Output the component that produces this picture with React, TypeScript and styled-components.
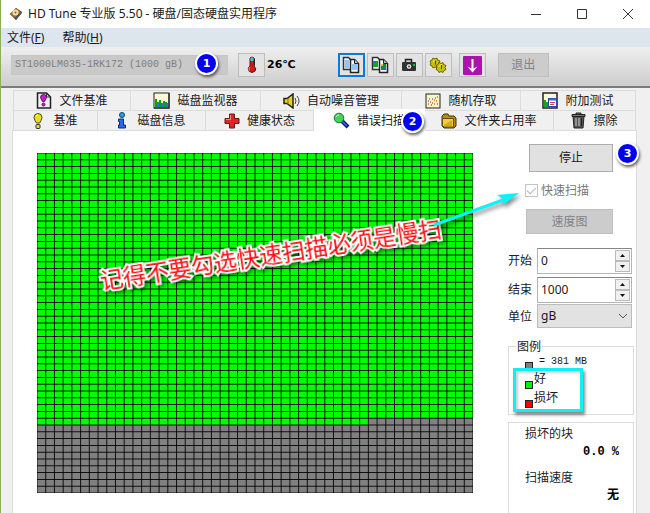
import React from "react";
import styled, { createGlobalStyle, css } from "styled-components";

const GlobalStyle = createGlobalStyle`
  *, *::before, *::after { box-sizing: border-box; }
  body {
    margin: 0;
    font-family: "Noto Sans", "Noto Sans CJK SC", sans-serif;
    font-size: 12px;
    line-height: 16px;
    color: #1a1a1a;
    background: #f0f0f0;
  }
  button, input, select { font: inherit; color: inherit; margin: 0; }
`;

const mono = css`
  font-family: "Liberation Mono", "Noto Sans CJK SC", monospace;
`;

const Window = styled.div`
  display: flex;
  flex-direction: column;
  height: 100vh;
  overflow: hidden;
  border-left: 1px solid #8cae5e;
  background: #f0f0f0;
`;

const TitleBar = styled.header`
  display: flex;
  flex: none;
  align-items: center;
  height: 28px;
  padding: 0 7px 0 8px;
  gap: 5px;
  background: #fff;
`;

const Title = styled.h1`
  flex: 1;
  margin: 0;
  font-size: 12px;
  font-weight: 400;
  white-space: nowrap;
`;

const WindowButtons = styled.div`
  display: flex;
  gap: 16px;
`;

const WindowButton = styled.button`
  display: grid;
  place-items: center;
  width: 30px;
  height: 26px;
  padding: 0;
  border: 0;
  background: none;
`;

const MenuBar = styled.nav`
  display: flex;
  flex: none;
  align-items: center;
  gap: 18px;
  height: 19px;
  padding: 0 6px;
  background: #dde5ee;
`;

const MenuItem = styled.button`
  padding: 0;
  border: 0;
  background: none;
  line-height: 19px;
`;

const Toolbar = styled.div`
  display: flex;
  flex: none;
  align-items: center;
  height: 41px;
  padding: 0 10px 3px;
  border-bottom: 2px solid #7c7c7c;
  background: linear-gradient(#efefef, #cdcdcd);
`;

const DriveBox = styled.div`
  position: relative;
  width: 217px;
`;

const DriveSelect = styled.select`
  ${mono}
  display: block;
  appearance: none;
  width: 100%;
  height: 20px;
  padding: 0 3px;
  border: 1px solid #c6c6c6;
  border-radius: 0;
  background: #c9c9c9;
  font-size: 10px;
  &:disabled { color: #808080; opacity: 1; }
`;

const Badge = styled.span<{ $place: "drive" | "tab" | "panel" }>`
  position: absolute;
  z-index: 3;
  display: grid;
  place-items: center;
  width: 23px;
  height: 23px;
  border: 2px solid #fff;
  border-radius: 50%;
  background: #0000f5;
  box-shadow: 1px 2px 3px #0009;
  color: #fff;
  font-family: "DejaVu Sans", sans-serif;
  font-size: 11px;
  font-weight: 700;
  ${(p) => p.$place === "drive" && css`right: 10px; top: -3px;`}
  ${(p) => p.$place === "tab" && css`right: 0; top: 0;`}
  ${(p) => p.$place === "panel" && css`right: -3px; top: 11px;`}
`;

const ToolButton = styled.button<{ $active?: boolean }>`
  display: grid;
  place-items: center;
  width: 27px;
  height: 24px;
  padding: 0;
  border: ${(p) => (p.$active ? "2px solid #0a7bd8" : "1px solid #bdbdbd")};
  background: #e3e3e3;
`;

const Temperature = styled.div`
  display: flex;
  align-items: center;
  gap: 2px;
  margin-left: 10px;
  font-family: "DejaVu Sans", "Noto Sans CJK SC", sans-serif;
  font-size: 11px;
  font-weight: 700;
  color: #000;
`;

const ToolGroup = styled.div`
  display: flex;
  gap: 2px;
  margin-left: 42px;
`;

const SaveGroup = styled.div`
  display: flex;
  gap: 12px;
  margin-left: 7px;
`;

const PushButton = styled.button`
  height: 28px;
  padding: 0;
  border: 1px solid #adadad;
  background: #e1e1e1;
  &:disabled {
    height: 25px;
    border-color: #bfbfbf;
    background: #cccccc;
    color: #838383;
  }
`;

const ExitButton = styled(PushButton)`
  width: 51px;
  &:disabled { height: 24px; }
`;

const Tabs = styled.div`
  flex: none;
  margin: 2px 14px 0 12px;
`;

const TabRow = styled.div<{ $columns: string }>`
  display: grid;
  grid-template-columns: ${(p) => p.$columns};
  height: 20px;
`;

const Tab = styled.button<{ $gap?: number }>`
  position: relative;
  display: flex;
  align-items: center;
  justify-content: center;
  gap: ${(p) => p.$gap ?? 7}px;
  padding: 0;
  border: solid #dcdcdc;
  border-width: 1px 1px 0 0;
  background: #f0f0f0;
  white-space: nowrap;
  &:first-child { border-left-width: 1px; }
  &[aria-selected="true"] {
    z-index: 1;
    margin: -1px 0;
    border-color: #fff;
    background: #fff;
  }
`;

const Panel = styled.main`
  position: relative;
  display: flex;
  flex: 1;
  gap: 35px;
  min-height: 0;
  margin: 0 13px 0 11px;
  padding: 22px 2px 0 24px;
  border: solid #dcdcdc;
  border-width: 1px 1px 0;
  background: #fff;
`;

const MapArea = styled.section`
  position: relative;
  flex: 1;
`;

const MapChart = styled.svg`
  display: block;
  width: 100%;
  height: 340px;
`;

const Caption = styled.p`
  position: absolute;
  left: 50%;
  top: 86px;
  width: 346px;
  margin: 0 0 0 -157px;
  transform: rotate(-8.8deg);
  color: #fb0d12;
  font-family: "Noto Sans CJK SC", sans-serif;
  font-size: 23px;
  line-height: 28px;
  white-space: nowrap;
  paint-order: stroke fill;
  -webkit-text-stroke: 4px #fff;
  filter: drop-shadow(2px 2px 2px #0008);
`;

const Arrow = styled.svg`
  position: absolute;
  z-index: 2;
  top: 35px;
  right: -52px;
  filter: drop-shadow(2px 3px 2px #0007);
`;

const Side = styled.aside`
  display: flex;
  flex-direction: column;
  width: 126px;
`;

const Actions = styled.div`
  display: flex;
  flex-direction: column;
  margin: -9px 21px 14px 18px;
  gap: 10px;
`;

const StopButton = styled(PushButton)`
  margin-left: 3px;
`;

const CheckLabel = styled.label`
  display: flex;
  align-items: center;
  gap: 3px;
  margin-left: -1px;
  color: #777;
  line-height: 17px;
`;

const CheckInput = styled.input`
  appearance: none;
  display: grid;
  place-items: center;
  width: 13px;
  height: 13px;
  border: 1px solid #c4c4c4;
  background: #fff;
  &:checked::after {
    content: "";
    width: 9px;
    height: 5px;
    margin-bottom: 3px;
    border: solid #b5b5b5;
    border-width: 0 0 1px 1px;
    transform: rotate(-45deg);
  }
`;

const Fields = styled.div`
  display: grid;
  grid-template-columns: 29px minmax(0, 1fr);
  row-gap: 3px;
  margin-right: 2px;
`;

const FieldLabel = styled.label`
  align-self: center;
  color: #222;
`;

const SpinBox = styled.div`
  display: flex;
  height: 26px;
  padding: 1px;
  border: 1px solid #b4b4b4;
  border-top-color: #858585;
`;

const SpinInput = styled.input`
  flex: 1;
  min-width: 0;
  padding: 0 2px;
  border: 0;
  background: #fff;
  outline: 0;
`;

const SpinButtons = styled.div`
  display: grid;
  width: 15px;
  grid-template-rows: 1fr 1fr;
`;

const SpinButton = styled.button`
  display: grid;
  place-items: center;
  padding: 0;
  border: 1px solid #bbb;
  background: #f0f0f0;
`;

const UnitBox = styled.div`
  position: relative;
  margin-top: -2px;
  svg { position: absolute; right: 4px; top: 9px; pointer-events: none; }
`;

const UnitSelect = styled.select`
  appearance: none;
  display: block;
  width: 100%;
  height: 24px;
  padding: 0 3px;
  border: 1px solid #bcbcbc;
  border-radius: 0;
  background: #e2e2e2;
`;

const Legend = styled.fieldset`
  position: relative;
  height: 79px;
  margin: 10px 0 7px;
  padding: 0 16px;
  border: 1px solid #dcdcdc;
  legend { margin-left: -9px; padding: 0 1px; line-height: 17px; }
`;

const LegendRow = styled.div<{ $note?: boolean }>`
  display: flex;
  align-items: flex-end;
  gap: ${(p) => (p.$note ? 6 : 1)}px;
  height: ${(p) => (p.$note ? 15 : 19)}px;
  line-height: ${(p) => (p.$note ? 16 : 20)}px;
  ${(p) => p.$note && mono}
  font-size: ${(p) => (p.$note ? 10 : 12)}px;
`;

const Swatch = styled.i<{ $color: string }>`
  width: 8px;
  height: 8px;
  border: 1px solid #222;
  background: ${(p) => p.$color};
`;

const Highlight = styled.span`
  position: absolute;
  left: 4px;
  top: 13px;
  width: 70px;
  height: 44px;
  border: 3px solid #12eff2;
  box-shadow: 2px 3px 3px #0007, inset 2px 2px 3px #0003;
`;

const Stats = styled.dl`
  flex: 1;
  margin: 0;
  padding: 2px 14px 0 16px;
  border: solid #dcdcdc;
  border-width: 1px 1px 0;
  dt { line-height: 18px; color: #222; }
  dd {
    ${mono}
    margin: 0 0 7px;
    font-weight: 700;
    line-height: 19px;
    text-align: right;
    color: #000;
  }
`;

const COLS = 50;
const ROWS = 50;
const FULL_ROWS = 39;
const PARTIAL = 38;

function BlockMap() {
  return (
    <MapChart viewBox="0 0 50 50" preserveAspectRatio="none" role="img" aria-label="错误扫描">
      <rect width={COLS} height={ROWS} fill="#808080" />
      <rect width={COLS} height={FULL_ROWS} fill="#00ff00" />
      <rect y={FULL_ROWS} width={PARTIAL} height={1} fill="#00ff00" />
      <g stroke="#000" strokeOpacity=".88">
        {Array.from({ length: COLS + 1 }, (_, i) => (
          <line key={`c${i}`} x1={i} x2={i} y1={0} y2={ROWS} vectorEffect="non-scaling-stroke" />
        ))}
        {Array.from({ length: ROWS + 1 }, (_, i) => (
          <line key={`r${i}`} x1={0} x2={COLS} y1={i} y2={i} vectorEffect="non-scaling-stroke" />
        ))}
      </g>
    </MapChart>
  );
}

const AppIcon = () => (
  <svg width="14" height="14" viewBox="0 0 14 14">
    <path d="M1 7 7 1l6 4-6 8z" fill="#222" />
    <path d="M1 7 7 1l5 4-6 6z" fill="#a7722d" />
    <circle cx="6.5" cy="5.5" r="3" fill="#f2dfb3" />
    <circle cx="6.5" cy="5.5" r="1" fill="#806020" />
    <path d="M6 11l6-6 1 1-6 7z" fill="#555" />
  </svg>
);
const Thermometer = () => (
  <svg width="14" height="18" viewBox="0 0 14 18">
    <path d="M5 2q2-2 4 0v8q3 3 1 5-3 3-6 0-2-3 1-5z" fill="#d81818" stroke="#541010" />
    <path d="M5.500 2q1.500-1.500 3 0v3h-3z" fill="#38c9cf" />
    <path d="M5 11q-2 2-.5 3.500" fill="none" stroke="#ff9a9a" />
    <path d="M9.500 2.500v7" stroke="#222" />
  </svg>
);
const CopyIcon = ({ image }: { image?: boolean }) => (
  <svg width="18" height="18" viewBox="0 0 18 18">
    <path d="M1.500 1.500h5l3 3v9h-8z" fill="#f4f8ff" stroke="#333" strokeWidth="1.500" />
    <path d="M8.500 3.500h4l4 4v9h-8z" fill="#f4f8ff" stroke="#222" strokeWidth="1.500" />
    <path d="M12.500 3.500v4h4" fill="#bbb" stroke="#222" />
    {image ? (
      <>
        <path d="M2 5h5v6H2z" fill="#16a516" />
        <path d="M10 8h5v6h-5z" fill="#0b8e2b" />
        <path d="M3 5h2v2H3zM13 11h2v2h-2z" fill="#2b68d8" />
        <path d="M10 8h2v2h-2z" fill="#f0c020" />
      </>
    ) : (
      <path d="M3 5h4M3 7h4M3 9h4M3 11h4M10 9h5M10 11h5M10 13h5" stroke="#3b8de0" />
    )}
  </svg>
);
const Camera = () => (
  <svg width="16" height="14" viewBox="0 0 16 14">
    <path d="M4.500 4V1.500h6V4" fill="#ccc" stroke="#222" strokeWidth="1.500" />
    <rect x="1" y="4" width="14" height="9" rx="1" fill="#333" />
    <circle cx="8" cy="8.500" r="3" fill="#ddd" stroke="#111" />
    <circle cx="8" cy="8.500" r="1" fill="#555" />
    <path d="M12 6h2v2h-2z" fill="#20b940" />
  </svg>
);
const Gears = () => (
  <svg width="18" height="16" viewBox="0 0 18 16">
    <g fill="#c9bd10" stroke="#6e6606">
      <path d="M4 1l2 1 2-1 .500 2L11 4l-1 2 1 2-2 1-1 2-2-1-2 1-1-2-2-1 1-2-1-2 2-1z" />
      <path d="M10 5.500l2 1 2-1 .500 2 2.500 1-1 2 1 2-2 1-1 2-2-1-2 1-1-2-2-1 1-2-1-2 2-1z" />
    </g>
    <path d="M4 5q1-2 3-2M10 9.500q1-2 3-2" fill="none" stroke="#f6ef6a" />
    <path d="M6.500 3.500v4M12.500 8v4" stroke="#4e4908" />
  </svg>
);
const SaveIcon = () => (
  <svg width="19" height="19" viewBox="0 0 19 19">
    <rect width="19" height="19" rx="1" fill="#ad12ae" />
    <path d="M9.500 3v11" stroke="#fff" strokeWidth="2" />
    <path d="M4.500 10.500l5 2.500 5-2.500-5 6z" fill="#fff" />
  </svg>
);
const Bulb = ({ color = "#e7df20" }: { color?: string }) => (
  <svg width="10" height="16" viewBox="0 0 10 16">
    <path d="M5 .5q4 0 4 4-.5 3-2.500 5.500h-3Q1.500 7.500 1 4.500q0-4 4-4z" fill={color} stroke="#4b4810" />
    <path d="M3 3q1-1.500 2-1" fill="none" stroke="#fff" />
    <rect x="3" y="11.500" width="4" height="4" rx="1" fill={color} stroke="#333" />
  </svg>
);
const FileBulb = () => (
  <svg width="16" height="17" viewBox="0 0 16 17">
    <path d="M1.500 1h9l4 4v11h-13z" fill="#eee" stroke="#222" strokeWidth="1.500" />
    <path d="M10.500 1v4h4" fill="none" stroke="#333" />
    <path d="M7.500 2.500q3 0 3 3l-2 4h-2l-2-4q0-3 3-3z" fill="#c71bd0" stroke="#631066" />
    <circle cx="7.500" cy="12.500" r="1.500" fill="#c71bd0" stroke="#631066" />
  </svg>
);
const Monitor = () => (
  <svg width="17" height="17" viewBox="0 0 17 17">
    <rect x="1" y="1" width="15" height="15" fill="#fffbd0" stroke="#222" />
    <path d="M2 15V7h2v3h2V8h2v3h2V9h2v1h2v5z" fill="#139b18" />
    <path d="M4 15v-4h2v4zM9 15v-4h2v4zM13 15v-4h2v4z" fill="#266fe6" />
    <path d="M16 1v15H1" fill="none" stroke="#333" strokeWidth="1.500" />
  </svg>
);
const Speaker = () => (
  <svg width="17" height="16" viewBox="0 0 17 16">
    <path d="M1 5.500h3L10 1v14l-6-4.500H1z" fill="#e7d31c" stroke="#222" strokeWidth="1.500" />
    <path d="M5 5v6" stroke="#89790c" />
    <path d="M12 5q2 3 0 6M14 3q4 5 0 10" fill="none" stroke="#444" />
  </svg>
);
const Scatter = () => (
  <svg width="16" height="16" viewBox="0 0 16 16">
    <rect x="1" y="1" width="14" height="14" fill="#fff5bd" stroke="#222" />
    <path d="M3 11h1M5 9h1M7 10h1M9 7h1M11 8h1M4 6h1M12 4h1M9 11h1" stroke="#e06632" strokeWidth="1.500" />
    <path d="M3 8h1M6 12h1M7 6h1M10 5h1M12 11h1" stroke="#7b65c8" strokeWidth="1.500" />
  </svg>
);
const Extra = () => (
  <svg width="16" height="17" viewBox="0 0 16 17">
    <rect x="1" y="1" width="14" height="15" fill="#fffbd2" stroke="#222" strokeWidth="1.500" />
    <path d="M2 8h2v7H2z" fill="#16a61c" />
    <path d="M4 10h2v5H4z" fill="#16a61c" />
    <rect x="6.500" y="6.500" width="8" height="8" fill="#fff" stroke="#2145a9" />
    <path d="M7 7.500h7" stroke="#3269d8" strokeWidth="2" />
    <path d="M8 10.500h5M8 12.500h4" stroke="#df3f58" />
  </svg>
);
const Info = () => (
  <svg width="10" height="17" viewBox="0 0 10 17">
    <circle cx="5" cy="3" r="2.500" fill="#27a4e9" stroke="#133965" />
    <path d="M1.500 7h5v6h2v3h-7v-3h1V9.500h-1z" fill="#246bea" stroke="#102b78" />
  </svg>
);
const Cross = () => (
  <svg width="16" height="16" viewBox="0 0 16 16">
    <path d="M5.500 1h5v4.500H15v5h-4.500V15h-5v-4.500H1v-5h4.500z" fill="#df2424" stroke="#6b1919" />
    <path d="M6.500 2v4.500H2" fill="none" stroke="#ff8585" />
  </svg>
);
const Magnifier = () => (
  <svg width="17" height="17" viewBox="0 0 17 17">
    <path d="m9 9 6 6" stroke="#101060" strokeWidth="4" />
    <path d="m9 9 5 5" stroke="#285be3" strokeWidth="2" />
    <circle cx="6" cy="6" r="4.800" fill="#43d35a" stroke="#22762d" />
    <path d="M3 5q1-2 3-2" fill="none" stroke="#cfffd6" />
  </svg>
);
const Folder = () => (
  <svg width="16" height="16" viewBox="0 0 16 16">
    <path d="M1 3l2-2h4l1 2h5l2 2v8l-2 2H3l-2-2z" fill="#b88c10" stroke="#41330a" />
    <path d="M1.500 5.500h11V14H3l-1.500-1z" fill="#efcf46" stroke="#665111" />
    <path d="M3 12l8-5v6H3z" fill="#d4a91d" />
  </svg>
);
const Trash = () => (
  <svg width="15" height="17" viewBox="0 0 15 17">
    <path d="M2 4h11l-1 12H3z" fill="#555" stroke="#222" />
    <path d="M1 2.500h13v2H1zM5 2V1h5v1" fill="#777" stroke="#222" />
    <path d="M5 6v8M8 6v8" stroke="#ccc" />
    <path d="M10.500 6v8" stroke="#222" />
  </svg>
);

const Triangle = ({ down }: { down?: boolean }) => (
  <svg width="5" height="3" viewBox="0 0 5 3">
    <path d={down ? "M0 0h5L2.500 3z" : "M0 3h5L2.500 0z"} fill="#111" />
  </svg>
);

function Spinner({ id, label, value }: { id: string; label: string; value: string }) {
  return (
    <>
      <FieldLabel htmlFor={id}>{label}</FieldLabel>
      <SpinBox>
        <SpinInput id={id} defaultValue={value} />
        <SpinButtons>
          <SpinButton aria-label={`${label} +`}><Triangle /></SpinButton>
          <SpinButton aria-label={`${label} -`}><Triangle down /></SpinButton>
        </SpinButtons>
      </SpinBox>
    </>
  );
}

export default function App() {
  return (
    <Window>
      <GlobalStyle />
      <TitleBar>
        <AppIcon />
        <Title>HD Tune 专业版 5.50 - 硬盘/固态硬盘实用程序</Title>
        <WindowButtons>
          <WindowButton aria-label="最小化">
            <svg width="10" height="10"><path d="M0 5.500h10" stroke="#333" /></svg>
          </WindowButton>
          <WindowButton aria-label="最大化">
            <svg width="10" height="10"><path d="M.5.5h9v9h-9z" fill="none" stroke="#333" /></svg>
          </WindowButton>
          <WindowButton aria-label="关闭">
            <svg width="10" height="10"><path d="m0 0 10 10M10 0 0 10" stroke="#333" /></svg>
          </WindowButton>
        </WindowButtons>
      </TitleBar>
      <MenuBar>
        <MenuItem>文件(<u>F</u>)</MenuItem>
        <MenuItem>帮助(<u>H</u>)</MenuItem>
      </MenuBar>
      <Toolbar>
        <DriveBox>
          <DriveSelect disabled aria-label="硬盘">
            <option>ST1000LM035-1RK172 (1000 gB)</option>
          </DriveSelect>
          <Badge $place="drive">1</Badge>
        </DriveBox>
        <Temperature>
          <ToolButton aria-label="温度"><Thermometer /></ToolButton>
          26℃
        </Temperature>
        <ToolGroup>
          <ToolButton $active aria-label="复制文本"><CopyIcon /></ToolButton>
          <ToolButton aria-label="复制图像"><CopyIcon image /></ToolButton>
          <ToolButton aria-label="截图"><Camera /></ToolButton>
          <ToolButton aria-label="选项"><Gears /></ToolButton>
        </ToolGroup>
        <SaveGroup>
          <ToolButton aria-label="保存"><SaveIcon /></ToolButton>
          <ExitButton disabled>退出</ExitButton>
        </SaveGroup>
      </Toolbar>
      <Tabs role="tablist">
        <TabRow $columns="118fr 130fr 141fr 119fr 115fr">
          <Tab role="tab"><FileBulb />文件基准</Tab>
          <Tab role="tab"><Monitor />磁盘监视器</Tab>
          <Tab role="tab"><Speaker />自动噪音管理</Tab>
          <Tab role="tab"><Scatter />随机存取</Tab>
          <Tab role="tab"><Extra />附加测试</Tab>
        </TabRow>
        <TabRow $columns="85fr 108fr 108fr 111fr 129fr 82fr">
          <Tab role="tab" $gap={10}><Bulb />基准</Tab>
          <Tab role="tab" $gap={10}><Info />磁盘信息</Tab>
          <Tab role="tab"><Cross />健康状态</Tab>
          <Tab role="tab" aria-selected="true">
            <Magnifier />错误扫描<Badge $place="tab">2</Badge>
          </Tab>
          <Tab role="tab"><Folder />文件夹占用率</Tab>
          <Tab role="tab"><Trash />擦除</Tab>
        </TabRow>
      </Tabs>
      <Panel>
        <MapArea>
          <BlockMap />
          <Caption>记得不要勾选快速扫描必须是慢扫</Caption>
          <Arrow width="95" height="44" viewBox="0 0 95 44">
            <path d="M4 37 73 12" stroke="#08f4f8" strokeWidth="3" />
            <path d="M89 5 67 7l6 4v6z" fill="#08f4f8" />
          </Arrow>
        </MapArea>
        <Side>
          <Actions>
            <StopButton>停止</StopButton>
            <CheckLabel>
              <CheckInput type="checkbox" defaultChecked disabled />快速扫描
            </CheckLabel>
            <PushButton disabled>速度图</PushButton>
          </Actions>
          <Fields>
            <Spinner id="start" label="开始" value="0" />
            <Spinner id="end" label="结束" value="1000" />
            <FieldLabel htmlFor="unit">单位</FieldLabel>
            <UnitBox>
              <UnitSelect id="unit"><option>gB</option></UnitSelect>
              <svg width="10" height="7"><path d="m1 1 4 4 4-4" fill="none" stroke="#555" /></svg>
            </UnitBox>
          </Fields>
          <Legend>
            <legend>图例</legend>
            <LegendRow $note><Swatch $color="#808080" />= 381 MB</LegendRow>
            <LegendRow><Swatch $color="#00f400" />好</LegendRow>
            <LegendRow><Swatch $color="#f40000" />损坏</LegendRow>
            <Highlight />
          </Legend>
          <Stats>
            <dt>损坏的块</dt>
            <dd>0.0 %</dd>
            <dt>扫描速度</dt>
            <dd>无</dd>
          </Stats>
        </Side>
        <Badge $place="panel">3</Badge>
      </Panel>
    </Window>
  );
}
